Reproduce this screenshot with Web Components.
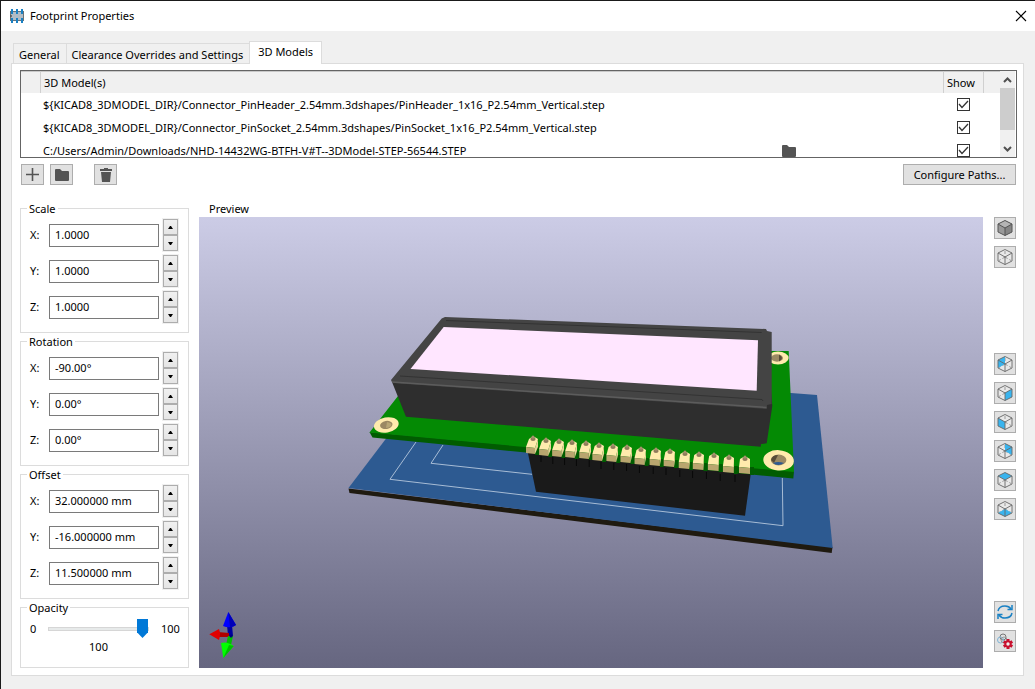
<!DOCTYPE html>
<html lang="en">
<head>
<meta charset="utf-8">
<title>Footprint Properties</title>
<style>
  html, body { margin: 0; height: 100%; }
  body { font: 11px/16px "Noto Sans", "Open Sans", sans-serif; color: #000; background: #f0f0f0; }
</style>
</head>
<body>
<dialog-window caption="Footprint Properties">
  <tab-strip slot="tabs">
    <tab-item>General</tab-item>
    <tab-item>Clearance Overrides and Settings</tab-item>
    <tab-item selected>3D Models</tab-item>
  </tab-strip>
  <model-table></model-table>
  <model-toolbar></model-toolbar>
  <settings-layout>
    <field-group slot="side" caption="Scale">
      <spin-field label="X:" value="1.0000"></spin-field>
      <spin-field label="Y:" value="1.0000"></spin-field>
      <spin-field label="Z:" value="1.0000"></spin-field>
    </field-group>
    <field-group slot="side" caption="Rotation">
      <spin-field label="X:" value="-90.00°"></spin-field>
      <spin-field label="Y:" value="0.00°"></spin-field>
      <spin-field label="Z:" value="0.00°"></spin-field>
    </field-group>
    <field-group slot="side" caption="Offset">
      <spin-field label="X:" value="32.000000 mm"></spin-field>
      <spin-field label="Y:" value="-16.000000 mm"></spin-field>
      <spin-field label="Z:" value="11.500000 mm"></spin-field>
    </field-group>
    <field-group slot="side" caption="Opacity" last>
      <opacity-slider></opacity-slider>
    </field-group>
    <board-preview slot="preview"></board-preview>
    <view-toolbar slot="views"></view-toolbar>
  </settings-layout>
</dialog-window>

<script>
const base = `:host, *, *::before, *::after { box-sizing: border-box; } button, input { font: inherit; color: inherit; margin: 0; }`;

class Base extends HTMLElement {
  constructor() {
    super();
    this.attachShadow({ mode: 'open' });
  }
  connectedCallback() {
    this.shadowRoot.innerHTML = `<style>${base}${this.css()}</style>${this.html()}`;
  }
}

const folder = '<svg width="14" height="12" viewBox="0 0 14 12"><path fill="#545454" d="M1 0H5L7 2H13Q14 2 14 3V11Q14 12 13 12H1Q0 12 0 11V1Q0 0 1 0Z"/></svg>';

customElements.define('dialog-window', class extends Base {
  css() { return `
    :host { display: flex; flex-direction: column; min-height: 100vh;
      border-top: 1px solid #1a1a1a; border-left: 1px solid #1a1a1a; background: #f0f0f0; }
    header { display: flex; align-items: center; height: 30px; padding: 0 8px 0 9px; background: #fff; }
    h1 { flex: 1; margin: 0 0 0 6px; font: inherit; }
    button { display: grid; place-items: center; width: 12px; height: 12px; padding: 0; border: 0; background: none; }
    .tabs { padding: 11px 12px 0; }
    main { flex: 1; display: flex; flex-direction: column; margin: 0 11px 13px 10px;
      padding: 6px 6px 7px 8px; background: #fff; border: 1px solid #dcdcdc; }`; }
  html() { return `
    <header>
      <svg width="14" height="14" viewBox="0 0 14 14"><path fill="#6b7276" d="M0 2h14v10H0z"/><path fill="#b0bcc6" d="M1 3h12v8H1z"/>
        <path fill="#1a81c4" d="M1 0h2v5H1zM6 0h2v5H6zM11 0h2v5h-2zM1 9h2v5H1zM6 9h2v5H6zM11 9h2v5h-2z"/><circle cx="1" cy="7" r="1" fill="#545454"/></svg>
      <h1>${this.getAttribute('caption')}</h1>
      <button aria-label="Close"><svg width="12" height="12" viewBox="0 0 12 12"><path stroke="#000" stroke-width="1.1" d="M1 1L11 11M11 1L1 11"/></svg></button>
    </header>
    <div class="tabs"><slot name="tabs"></slot></div>
    <main><slot></slot></main>`; }
});

customElements.define('tab-strip', class extends Base {
  css() { return `:host { display: flex; align-items: flex-end; height: 22px; margin-bottom: -1px; position: relative; }`; }
  html() { return `<slot></slot>`; }
});

customElements.define('tab-item', class extends Base {
  css() { return `
    :host { display: block; }
    button { display: block; height: 20px; margin-bottom: 1px; padding: 2px 6px 0 5px; line-height: 17px; border: 1px solid #dcdcdc; border-width: 1px 0 0 1px; background: #f0f0f0; white-space: nowrap; }
    :host([selected]) button { height: 23px; margin: 0; padding: 0 8px 2px; border-width: 1px 1px 0; background: #fff; line-height: 20px; }`; }
  html() { return `<button role="tab"><slot></slot></button>`; }
});

customElements.define('model-table', class extends Base {
  css() { return `
    :host { display: grid; grid-template-columns: 1fr 16px; height: 88px; border: 1px solid #646464; overflow: hidden; background: #fff; }
    .view { overflow: hidden; min-width: 0; }
    table { width: 100%; table-layout: fixed; border-collapse: separate; border-spacing: 0; }
    th { height: 22px; padding: 1px 3px 0; text-align: left; font-weight: normal; background: #f0f0f0; border-top: 1px solid #c8c8c8; border-right: 1px solid #d0d0d0; }
    th:last-child { border-right: 0; }
    td { height: 23px; padding: 0 2px; white-space: nowrap; }
    .c0 { width: 20px; } .c2 { width: 40px; } .c3 { width: 16px; }
    .path { display: flex; align-items: center; justify-content: space-between; }
    .path button { display: flex; padding: 0; border: 0; background: none; margin-right: 146px; }
    .show { text-align: center; padding: 0; }
    input { display: block; appearance: none; width: 13px; height: 13px; margin: 0 0 0 13px; border: 1px solid #333; background: #fff; }
    input:checked { background: #fff url("data:image/svg+xml,%3Csvg xmlns='http://www.w3.org/2000/svg' width='11' height='11'%3E%3Cpath fill='none' stroke='%23333' stroke-width='1.3' d='M1 5L4 8.5L10 2'/%3E%3C/svg%3E"); }
    .bar { display: flex; flex-direction: column; background: #f0f0f0; margin-right: 1px; }
    .bar button { height: 17px; padding: 0; border: 0; background: none; display: grid; place-items: center; }
    .thumb { height: 42px; background: #cdcdcd; } .rest { flex: 1; }`; }
  html() {
    const rows = ['${KICAD8_3DMODEL_DIR}/Connector_PinHeader_2.54mm.3dshapes/PinHeader_1x16_P2.54mm_Vertical.step',
      '${KICAD8_3DMODEL_DIR}/Connector_PinSocket_2.54mm.3dshapes/PinSocket_1x16_P2.54mm_Vertical.step',
      'C:/Users/Admin/Downloads/NHD-14432WG-BTFH-V#T--3DModel-STEP-56544.STEP'];
    return `<div class="view"><table><thead><tr><th class="c0"></th><th>3D Model(s)</th><th class="c2">Show</th><th class="c3"></th></tr></thead><tbody>${
      rows.map((r, i) => `<tr><td></td><td><div class="path"><span>${r}</span>${i === 2 ? `<button aria-label="Browse for model">${folder}</button>` : ''}</div></td>
      <td class="show"><input type="checkbox" checked aria-label="Show model ${i + 1}"></td><td></td></tr>`).join('')}</tbody></table></div>
      <div class="bar"><button aria-label="Scroll up"><svg width="9" height="6" viewBox="0 0 9 6"><path fill="none" stroke="#505050" stroke-width="2" d="M1 5L4.500 1.500L8 5"/></svg></button>
      <div class="thumb"></div><div class="rest"></div>
      <button aria-label="Scroll down"><svg width="9" height="6" viewBox="0 0 9 6"><path fill="none" stroke="#505050" stroke-width="2" d="M1 1L4.500 4.500L8 1"/></svg></button></div>`;
  }
});

customElements.define('model-toolbar', class extends Base {
  css() { return `
    :host { display: flex; gap: 6px; margin: 6px 1px 0; }
    button { display: grid; place-items: center; width: 23px; height: 21px; padding: 0; border: 1px solid #adadad; background: #e1e1e1; }
    .del { margin-left: 15px; }
    .wide { width: 113px; margin-left: auto; }`; }
  html() { return `
    <button aria-label="Add model"><svg width="13" height="13" viewBox="0 0 13 13"><path stroke="#545454" stroke-width="1.600" d="M6.500 0V13M0 6.500H13"/></svg></button>
    <button aria-label="Open folder">${folder}</button>
    <button class="del" aria-label="Delete model"><svg width="12" height="14" viewBox="0 0 12 14"><path fill="#545454" d="M0 1H4V0H8V1H12V3H0ZM1 4H11L10 14H2Z"/></svg></button>
    <button class="wide">Configure Paths...</button>`; }
});

customElements.define('settings-layout', class extends Base {
  css() { return `
    :host { flex: 1; display: grid; grid-template-columns: 169px 1fr 22px; column-gap: 10px; margin-top: 16px; padding-right: 1px; }
    .side { display: flex; flex-direction: column; gap: 1px; }
    .preview { display: flex; flex-direction: column; margin-right: 1px; min-width: 0; }
    h2 { margin: 0 0 0 10px; font: inherit; }
    .views { padding-top: 16px; }`; }
  html() { return `<div class="side"><slot name="side"></slot></div>
    <div class="preview"><h2>Preview</h2><slot name="preview"></slot></div>
    <div class="views"><slot name="views"></slot></div>`; }
});

customElements.define('field-group', class extends Base {
  css() { return `
    :host { display: flex; }
    :host([last]) { flex: 1; }
    fieldset { flex: 1; min-width: 0; margin: 0; padding: 2px 9px 8px 9px; border: 1px solid #dcdcdc; }
    :host([last]) fieldset { padding-bottom: 0; }
    legend { height: 15px; line-height: 15px; margin-left: -3px; padding: 0 2px; }
    .rows { display: flex; flex-direction: column; gap: 2px; }`; }
  html() { return `<fieldset><legend>${this.getAttribute('caption')}</legend><div class="rows"><slot></slot></div></fieldset>`; }
});

customElements.define('spin-field', class extends Base {
  css() { return `
    :host { display: flex; align-items: center; height: 34px; }
    label { width: 19px; }
    input { flex: 1; min-width: 0; height: 23px; padding: 0 5px 1px; border: 1px solid #7a7a7a; background: #fff; outline: 0; }
    .spin { display: flex; flex-direction: column; width: 17px; height: 34px; margin-left: 3px; border: 1px solid #f0f0f0; }
    button { flex: 1; display: grid; place-items: center; padding: 0; border: 1px solid #adadad; background: linear-gradient(#f0f0f0, #e5e5e5); }`; }
  html() { return `
    <label for="v">${this.getAttribute('label')}</label><input id="v" type="text" value="${this.getAttribute('value')}">
    <div class="spin"><button aria-label="Increase"><svg width="5" height="3" viewBox="0 0 5 3"><path d="M0 3L2 0H3L5 3Z"/></svg></button>
    <button aria-label="Decrease"><svg width="5" height="3" viewBox="0 0 5 3"><path d="M0 0L2 3H3L5 0Z"/></svg></button></div>`; }
});

customElements.define('opacity-slider', class extends Base {
  css() { return `
    :host { display: block; }
    .row { display: flex; align-items: center; height: 24px; }
    .min { flex: none; width: 18px; } .max { margin-left: 12px; }
    input { flex: none; appearance: none; width: 101px; height: 19px; background: none; }
    input::-webkit-slider-runnable-track { height: 4px; border: 1px solid #d6d6d6; background: #e7eaea; }
    input::-webkit-slider-thumb { appearance: none; width: 11px; height: 19px; margin-top: -9px; background: #0078d7; clip-path: polygon(0 0, 100% 0, 100% 70%, 50% 100%, 0 70%); }
    output { display: block; width: 137px; line-height: 12px; text-align: center; }`; }
  html() { return `<div class="row"><span class="min">0</span><input id="o" type="range" min="0" max="100" value="100" aria-label="Opacity"><span class="max">100</span></div><output for="o">100</output>`; }
});

customElements.define('board-preview', class extends Base {
  css() { return `
    :host { flex: 1; display: grid; min-height: 0; background: linear-gradient(#cccce6, #666680); }
    svg { display: block; width: 100%; height: 100%; }`; }
  html() {
    const pins = [[533, 438], [546, 440], [559, 441], [572, 442], [586, 443], [599, 445], [613, 446], [627, 447], [641, 449], [656, 450], [670, 451], [685, 453], [699, 454], [714, 455], [729, 457], [745, 458]];
    const pads = pins.map(([x, y], i) => {
      const s = i / 15;
      const l = x - 7 + s, r = x + 2 + s * 3, t = x - 4 - s;
      return `<path fill="#015c01" d="M${r} ${y + 9}h4v8h-4z"/>
        <path fill="#ffebad" d="M${l} ${y + 9}L${t} ${y + 1}Q${x} ${y - 3} ${x + 5} ${y + 1}L${r} ${y + 10}Z"/>
        <path fill="#b9a66f" d="M${l} ${y + 9}L${r} ${y + 10}V${y + 16}L${l} ${y + 15}Z"/>
        <path fill="#e6d396" d="M${r} ${y + 10}L${x + 5} ${y + 1}V${y + 9}L${r} ${y + 16}Z"/>
        <ellipse cx="${x}" cy="${y + 1}" rx="2.600" ry="1.900" fill="#8f7c5b"/><circle cx="${x}" cy="${y - 1}" r="1.500" fill="#a5906b"/>
        <path stroke="#000" stroke-width=".7" d="M${x + 8 - s * 18} ${y + 17}v7"/>`;
    }).join('');
    return `<svg viewBox="199 217 784 451" role="img" aria-label="Preview of the display module on its board">
      <path fill="#1f1a10" d="M348.500 488.500L832.500 547L831.700 553L349.500 493Z"/>
      <path fill="#2d5a91" d="M348.500 488L388 436L600 380L791 393L817 395L832.700 548Z"/>
      <path fill="none" stroke="#b5c7dc" stroke-width=".9" d="M416 442L390 479.300L783 525.700L782.300 478M443 445L431 463.300L532 474.300"/>
      <path fill="#1a1a1a" d="M527.700 452L536 491.700L745 515.700L751 472Z"/>
      <path fill="#015c01" d="M369.500 432L794 471L793.300 478.500L372.500 437.500Z"/>
      <path fill="#048a04" d="M369.500 432.500L398 396L600 345L772 351L788.700 351L794 472Z"/>
      <g fill="#ffebad"><ellipse cx="386.300" cy="425" rx="12.500" ry="7.600" transform="rotate(-10 386 425)"/><ellipse cx="778.600" cy="460.300" rx="15.300" ry="10.200" transform="rotate(4 778 460)"/><ellipse cx="778" cy="358" rx="10.700" ry="6.500"/></g>
      <g fill="#9b8963"><ellipse cx="386.300" cy="425" rx="6.300" ry="4" transform="rotate(-10 386 425)"/><ellipse cx="778.600" cy="460" rx="7.800" ry="5.400"/><ellipse cx="777" cy="358" rx="6" ry="3.700"/></g>
      <path fill="#b7a675" d="M387 422Q393 423 391 426Q389 428 386 428Z"/><path fill="#574c38" d="M771 460Q772 455 778 455L774 463Z"/><path fill="#2d5a91" d="M773 463Q778 461 784 463Q778 467 773 463Z"/><path fill="#574c38" d="M779 354.500Q785 358 779 361.500Z"/>
      <path fill="#2e2e2e" d="M392 382L406 416.700L760.700 446.700L761 444L766.700 443.300L772.300 406L766 330Z"/>
      <path fill="#444" d="M391 380L441.700 318.500L445 317L766 329L767 331L771.700 332V404L767 405L766.700 409L392.300 383Z"/>
      <path fill="none" stroke="#5c5c5c" stroke-width="1.500" d="M392 382L766.500 407.500"/>
      <path fill="none" stroke="#2f2f2f" stroke-width=".8" d="M446 320.500L761.700 332.500M400 376L762 399.500L763 401"/>
      <path fill="#ffe6ff" d="M443.700 327L758 340.300L756.700 390.700L410.500 369Z"/>
      ${pads}
      <path fill="#0000a0" d="M227 625h5l1 11h-5z"/><path fill="#00f" d="M228.300 612L236 625Q230 629 223 626Z"/><path fill="#0000b8" d="M228.300 612L236 625Q234 627 230 627Z"/>
      <path fill="#b00000" d="M218 632L229 633V637L218 637Z"/><path fill="#e00000" d="M209.300 634.300L219 629Q221 634 219 640Z"/>
      <path fill="#00c000" d="M228 636h5l-2 9h-5z"/><path fill="#0f0" d="M223.300 658L221 643Q227 641 233.700 646Z"/><path fill="#00c000" d="M223.300 658L229 645L233.700 646Z"/>
      <circle cx="231" cy="636" r="1.500" fill="#000080"/>
    </svg>`;
  }
});

customElements.define('view-toolbar', class extends Base {
  css() { return `
    :host { display: flex; flex-direction: column; gap: 7px; }
    button { display: grid; place-items: center; width: 22px; height: 22px; padding: 0; border: 1px solid #adadad; background: #e1e1e1; }
    .views { margin-top: 78px; } .tools { margin-top: 74px; }`; }
  html() {
    const hex = 'M8 .5L15 4V12L8 15.500L1 12V4Z';
    const cube = face => `<svg width="18" height="18" viewBox="-1 -1 18 18" fill="none"><path d="${hex}" fill="#e8e8e8"/>
      <path stroke="#999" stroke-dasharray="3 2" d="M8 2V8M8 8L2 11.500M8 8L14 11.500"/>${face ? `<path fill="#39b4ee" d="${face}"/>` : ''}<path stroke="#666" stroke-width=".9" d="${hex}M1 4L8 8L15 4M8 8V15.500"/></svg>`;
    const views = [['View left', 'M1 4L8 .5V8L1 12Z'], ['View right', 'M8 8L15 4V12L8 15.500Z'], ['View front', 'M1 4L8 8V15.500L1 12Z'],
      ['View back', 'M8 .5L15 4V12L8 8Z'], ['View top', 'M8 .5L15 4L8 8L1 4Z'], ['View bottom', 'M8 8L15 12L8 15.500L1 12Z']];
    return `<button aria-label="Solid"><svg width="18" height="18" viewBox="-1 -1 18 18"><path fill="#999" d="${hex}"/><path fill="#b5b5b5" d="M8 .5L15 4L8 8L1 4Z"/><path fill="#858585" d="M8 8L15 4V12L8 15.500Z"/><path fill="none" stroke="#555" d="${hex}M1 4L8 8L15 4M8 8V15.500"/></svg></button>
      <button aria-label="Wireframe">${cube('')}</button>
      ${views.map(([n, f], i) => `<button${i ? '' : ' class="views"'} aria-label="${n}">${cube(f)}</button>`).join('')}
      <button class="tools" aria-label="Reload"><svg width="16" height="16" viewBox="0 0 16 16" fill="none" stroke="#1a81c4" stroke-width="1.500"><path d="M1 7Q2 2 8 2Q12 2 14 5M15 9Q14 14 8 14Q4 14 2 11"/><path d="M15 1V5.500H10.500M1 15V10.500H5.500"/></svg></button>
      <button aria-label="Settings"><svg width="18" height="18" viewBox="0 0 18 18" fill="none"><circle cx="7" cy="5" r="3" stroke="#777"/><circle cx="4.500" cy="8" r="3" stroke="#7fb4d6"/><circle cx="8" cy="8" r="3" stroke="#999"/>
        <g transform="translate(12 12)"><path stroke="#c8102e" stroke-width="3" d="M0-5V5M-4.300-2.500L4.300 2.500M-4.300 2.500L4.300-2.500"/><circle r="3.500" fill="#c8102e"/><circle r="1.700" fill="#eee"/></g></svg></button>`;
  }
});
</script>
</body>
</html>
